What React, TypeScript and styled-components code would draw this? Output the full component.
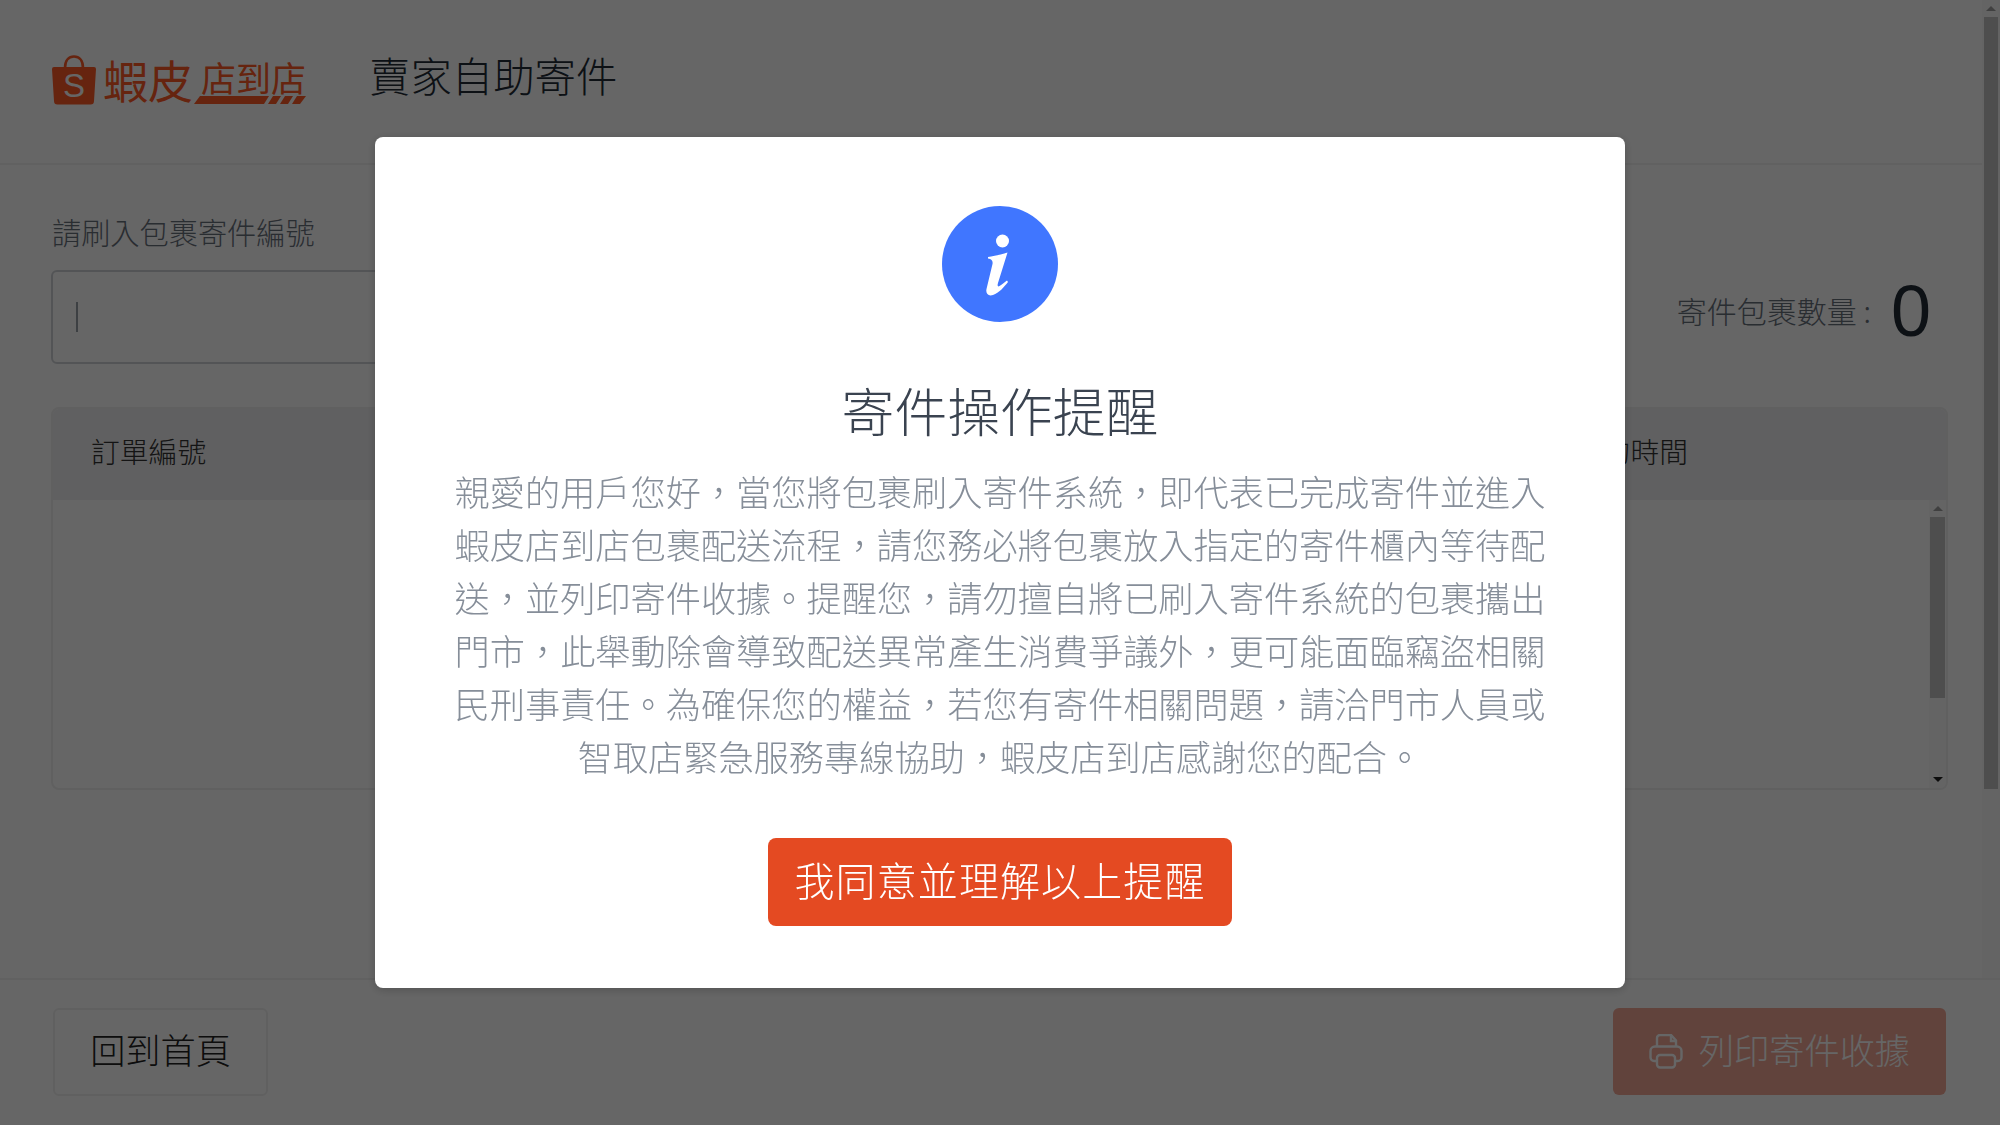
import React from "react";
import styled, { createGlobalStyle } from "styled-components";

const FONT = `"Noto Sans CJK TC", "Noto Sans", "Liberation Sans", sans-serif`;

const Global = createGlobalStyle`
  html, body { margin: 0; padding: 0; height: 100%; overflow: hidden; background: #fff; }
  body { font-family: ${FONT}; font-weight: 300; color: #333; }
  * { box-sizing: border-box; }
`;

const C = "\uFF0C";
const NOTICE = [
  "親愛的用戶您好",
  "當您將包裹刷入寄件系統",
  "即代表已完成寄件並進入蝦皮店到店包裹配送流程",
  "請您務必將包裹放入指定的寄件櫃內等待配送",
  "並列印寄件收據。提醒您",
  "請勿擅自將已刷入寄件系統的包裹攜出門市",
  "此舉動除會導致配送異常產生消費爭議外",
  "更可能面臨竊盜相關民刑事責任。為確保您的權益",
  "若您有寄件相關問題",
  "請洽門市人員或智取店緊急服務專線協助",
  "蝦皮店到店感謝您的配合。",
].join(C);

const Shell = styled.div`
  width: 2000px;
  height: 1125px;
  display: flex;
  flex-direction: column;
  background: #fff;
`;
const Upper = styled.div`
  flex: 1;
  min-height: 0;
  display: flex;
`;
const Page = styled.div`
  flex: 1;
  min-width: 0;
`;
const Header = styled.header`
  height: 165px;
  display: flex;
  align-items: flex-start;
  padding: 47px 0 0 52px;
  border-bottom: 2px solid #f2f2f2;
`;
const Logo = styled.div`
  width: 317px;
  height: 64px;
  display: flex;
  align-items: flex-start;
  color: #ff5a26;
`;
const BagIcon = styled.svg`
  width: 44px;
  height: 50px;
  margin-top: 8px;
  flex: none;
`;
const LogoName = styled.span`
  margin-left: 7px;
  font-size: 45px;
  line-height: 66px;
  height: 64px;
  font-weight: 400;
`;
const LogoService = styled.div`
  margin-left: 1px;
  margin-top: 11px;
  width: 112px;
  display: flex;
  flex-direction: column;
  align-items: flex-end;
`;
const LogoServiceText = styled.span`
  font-size: 35px;
  line-height: 37px;
  font-weight: 400;
  width: 105px;
  margin-right: 0;
  white-space: nowrap;
`;
const LogoStripe = styled.svg`
  width: 112px;
  height: 8px;
  margin-top: 1px;
`;
const Title = styled.h1`
  margin: 0;
  font-size: 41.4px;
  line-height: 54px;
  font-weight: 300;
  color: #222b36;
`;
const Content = styled.main`
  padding: 46px 34px 0 51px;
`;
const Label = styled.div`
  font-size: 29.2px;
  line-height: 40px;
  color: #68707c;
  padding-left: 1px;
  margin-bottom: 18px;
`;
const ScanRow = styled.div`
  display: flex;
  align-items: center;
  justify-content: space-between;
`;
const Field = styled.div`
  width: 1150px;
  height: 94px;
  border: 2px solid #d0d3d8;
  border-radius: 6px;
  display: flex;
  align-items: center;
  padding-left: 23px;
`;
const Caret = styled.span`
  width: 2px;
  height: 30px;
  background: #9aa0a8;
`;
const Counter = styled.div`
  display: flex;
  align-items: center;
  margin-right: 17px;
  padding-bottom: 11px;
`;
const CounterLabel = styled.span`
  font-size: 30px;
  color: #68707c;
  margin-right: 20px;
  padding-bottom: 3px;
`;
const CounterValue = styled.span`
  font-family: "Liberation Sans", sans-serif;
  font-size: 72px;
  font-weight: 400;
  line-height: 84px;
  color: #222b36;
`;
const TableCard = styled.section`
  margin-top: 43px;
  height: 383px;
  border: 2px solid #f0f0f0;
  border-radius: 8px;
  display: flex;
  flex-direction: column;
  overflow: hidden;
`;
const TableHead = styled.div`
  height: 91px;
  flex: none;
  background: #f0f0f2;
  display: flex;
  align-items: center;
  justify-content: space-between;
  padding: 0 258px 9px 38px;
  font-size: 28.8px;
  color: #333;
`;
const TableBody = styled.div`
  flex: 1;
  display: flex;
  justify-content: flex-end;
`;
const Track = styled.div<{ $w: number; $pad: number }>`
  width: ${(p) => p.$w}px;
  height: 100%;
  flex: none;
  background: #fbfbfb;
  display: flex;
  flex-direction: column;
  align-items: center;
  padding: 0 ${(p) => p.$pad}px;
`;
const ArrowBox = styled.div`
  height: 17px;
  width: 100%;
  flex: none;
  display: flex;
  align-items: center;
  justify-content: center;
`;
const Arrow = styled.span<{ $down?: boolean; $dark?: boolean }>`
  width: 0;
  height: 0;
  border-left: 5px solid transparent;
  border-right: 5px solid transparent;
  ${(p) =>
    p.$down
      ? `border-top: 5px solid ${p.$dark ? "#222" : "#a0a0a0"};`
      : `border-bottom: 5px solid ${p.$dark ? "#222" : "#a0a0a0"};`}
`;
const Thumb = styled.div<{ $h: number }>`
  width: 100%;
  height: ${(p) => p.$h}px;
  flex: none;
  background: #c4c4c4;
`;
const Spacer = styled.div`
  flex: 1;
`;
const Footer = styled.footer`
  height: 147px;
  flex: none;
  border-top: 2px solid #f2f2f2;
  display: flex;
  align-items: center;
  justify-content: space-between;
  padding: 0 54px 2px 53px;
`;
const HomeButton = styled.button`
  width: 215px;
  height: 88px;
  background: #fff;
  border: 2px solid #f0f0f0;
  border-radius: 6px;
  font-family: ${FONT};
  font-weight: 300;
  font-size: 35.2px;
  color: #222;
  padding: 0 0 6px;
`;
const PrintButton = styled.button`
  width: 333px;
  height: 87px;
  background: #f2a796;
  border: none;
  border-radius: 6px;
  font-family: ${FONT};
  font-weight: 300;
  font-size: 35.2px;
  color: #fff;
  display: flex;
  align-items: center;
  justify-content: center;
  gap: 16px;
  padding: 0;
`;
const PrintLabel = styled.span`
  padding-bottom: 6px;
`;
const PrintIcon = styled.svg`
  width: 34px;
  height: 35px;
  flex: none;
`;
const Overlay = styled.div`
  position: fixed;
  inset: 0;
  background: rgba(0, 0, 0, 0.6);
  display: flex;
  align-items: center;
  justify-content: center;
`;
const Modal = styled.div`
  width: 1250px;
  height: 851px;
  background: #fff;
  border-radius: 8px;
  box-shadow: 0 2px 10px rgba(0, 0, 0, 0.2);
  display: flex;
  flex-direction: column;
  align-items: center;
  padding: 69px 75px 0;
`;
const InfoIcon = styled.svg`
  width: 116px;
  height: 116px;
  flex: none;
`;
const ModalTitle = styled.h2`
  margin: 48px 0 0;
  font-size: 52.8px;
  line-height: 78px;
  font-weight: 300;
  color: #3a4350;
`;
const ModalText = styled.p`
  margin: 16px 0 0;
  width: 100%;
  font-size: 35.2px;
  line-height: 53px;
  text-align: center;
  font-weight: 300;
  color: #868e99;
`;
const AgreeButton = styled.button`
  margin-top: 56px;
  width: 464px;
  height: 88px;
  background: #e44a22;
  border: none;
  border-radius: 8px;
  font-family: ${FONT};
  font-weight: 300;
  font-size: 40px;
  letter-spacing: 1.1px;
  color: #fff;
  padding: 0 0 7px;
`;

export default function App() {
  return (
    <div lang="zh-TW">
      <Global />
      <Shell>
        <Upper>
          <Page>
            <Header>
              <Logo>
                <BagIcon viewBox="0 0 44 50">
                  <path
                    d="M2 12 H42 a2 2 0 0 1 2 2 L42 46 a3.5 3.5 0 0 1 -3.5 3.5 H5.5 A3.5 3.5 0 0 1 2 46 L0 14 a2 2 0 0 1 2 -2 Z"
                    fill="currentColor"
                  />
                  <path
                    d="M13 13 C13 5 17 1.5 22 1.5 C27 1.5 31 5 31 13"
                    fill="none"
                    stroke="currentColor"
                    strokeWidth="2.6"
                  />
                  <text
                    x="22"
                    y="42"
                    textAnchor="middle"
                    fill="#fff"
                    fontFamily="'Liberation Sans', sans-serif"
                    fontSize="33"
                  >
                    S
                  </text>
                </BagIcon>
                <LogoName>蝦皮</LogoName>
                <LogoService>
                  <LogoServiceText>店到店</LogoServiceText>
                  <LogoStripe viewBox="0 0 112 8">
                    <path
                      d="M6 0 H75 L70 8 H0 Z M79 0 H87 L82 8 H74 Z M91 0 H99 L94 8 H86 Z M103 0 H112 L106 8 H98 Z"
                      fill="currentColor"
                    />
                  </LogoStripe>
                </LogoService>
              </Logo>
              <Title>賣家自助寄件</Title>
            </Header>
            <Content>
              <Label>請刷入包裹寄件編號</Label>
              <ScanRow>
                <Field>
                  <Caret />
                </Field>
                <Counter>
                  <CounterLabel>寄件包裹數量 :</CounterLabel>
                  <CounterValue>0</CounterValue>
                </Counter>
              </ScanRow>
              <TableCard>
                <TableHead>
                  <span>訂單編號</span>
                  <span>寄件的時間</span>
                </TableHead>
                <TableBody>
                  <Track $w={17} $pad={1}>
                    <ArrowBox>
                      <Arrow />
                    </ArrowBox>
                    <Thumb $h={181} />
                    <Spacer />
                    <ArrowBox>
                      <Arrow $down $dark />
                    </ArrowBox>
                  </Track>
                </TableBody>
              </TableCard>
            </Content>
          </Page>
          <Track $w={18} $pad={2}>
            <ArrowBox>
              <Arrow />
            </ArrowBox>
            <Thumb $h={772} />
          </Track>
        </Upper>
        <Footer>
          <HomeButton>回到首頁</HomeButton>
          <PrintButton>
            <PrintIcon viewBox="0 0 34 35" fill="none" stroke="#fff" strokeWidth="2.4">
              <path d="M8 13 V4 a3 3 0 0 1 3 -3 h11 l5 5.5 V13" />
              <path d="M22 1 V7 h5" />
              <path d="M8 27 H5 a3.5 3.5 0 0 1 -3.5 -3.5 V17 a4.5 4.5 0 0 1 4.5 -4.5 h22 a4.5 4.5 0 0 1 4.5 4.5 v6.5 A3.5 3.5 0 0 1 29 27 h-3" />
              <rect x="8" y="21" width="18" height="12.5" rx="3" />
            </PrintIcon>
            <PrintLabel>列印寄件收據</PrintLabel>
          </PrintButton>
        </Footer>
      </Shell>
      <Overlay>
        <Modal>
          <InfoIcon viewBox="0 0 116 116">
            <circle cx="58" cy="58" r="58" fill="#4076ff" />
            <circle cx="60.5" cy="35" r="6.5" fill="#fff" />
            <path
              d="M46 51 C51 50 60 48.5 65.5 46.5 L56 77 C55 80 56 81 57.5 80 C60 78.5 63 76 65 74.5 L66 76 C62 81 57 87 51 89 C46 90.5 43.5 87.5 44.5 83 L50.5 58 C51 55 50 53 46 52.5 Z"
              fill="#fff"
            />
          </InfoIcon>
          <ModalTitle>寄件操作提醒</ModalTitle>
          <ModalText>{NOTICE}</ModalText>
          <AgreeButton>我同意並理解以上提醒</AgreeButton>
        </Modal>
      </Overlay>
    </div>
  );
}
